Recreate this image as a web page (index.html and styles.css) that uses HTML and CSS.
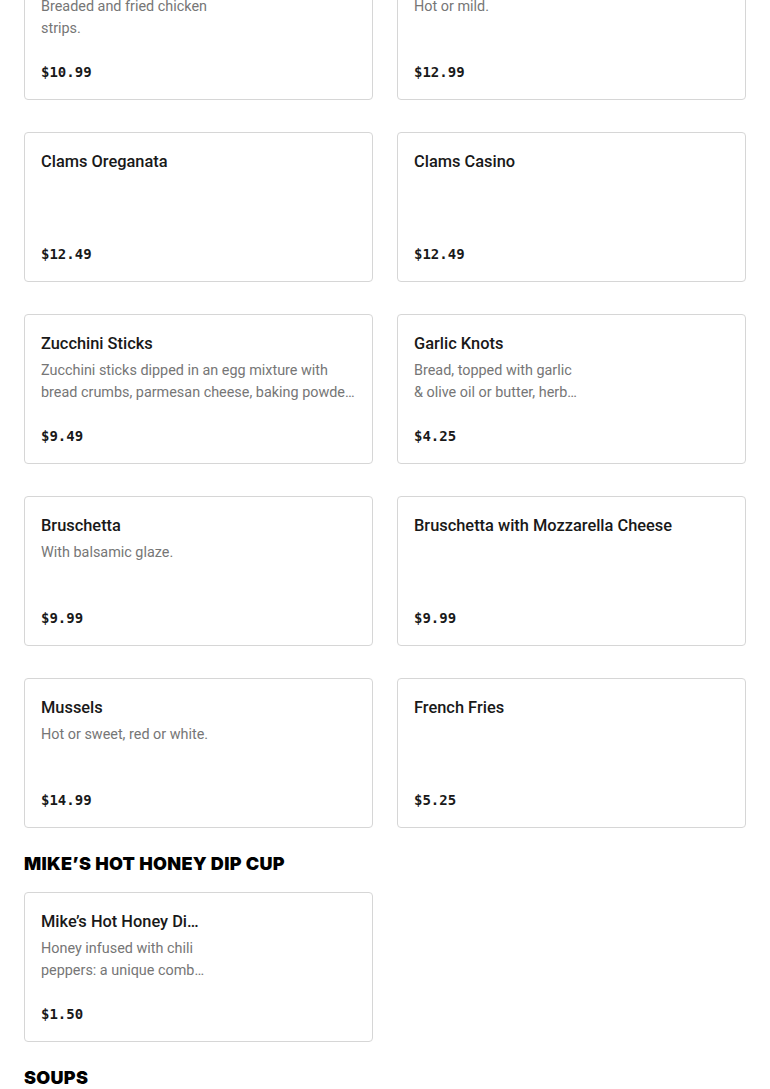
FILE: index.html
```html
<!DOCTYPE html>
<html lang="en">
<head>
<meta charset="utf-8">
<title>Menu</title>
<link rel="stylesheet" href="styles.css">
</head>
<body>
<main class="menu">
  <section class="section section-first">
    <div class="grid">
      <div class="card">
        <div class="card-title">Chicken Fingers</div>
        <div class="card-desc narrow"><span class="desc-line">Breaded and fried chicken</span><span class="desc-line">strips.</span></div>
        <div class="card-price">$10.99</div>
      </div>
      <div class="card">
        <div class="card-title">Buffalo Wings</div>
        <div class="card-desc narrow"><span class="desc-line">Hot or mild.</span></div>
        <div class="card-price">$12.99</div>
      </div>
      <div class="card">
        <div class="card-title">Clams Oreganata</div>
        <div class="card-price">$12.49</div>
      </div>
      <div class="card">
        <div class="card-title">Clams Casino</div>
        <div class="card-price">$12.49</div>
      </div>
      <div class="card">
        <div class="card-title">Zucchini Sticks</div>
        <div class="card-desc"><span class="desc-line">Zucchini sticks dipped in an egg mixture with</span><span class="desc-line">bread crumbs, parmesan cheese, baking powder and spices.</span></div>
        <div class="card-price">$9.49</div>
      </div>
      <div class="card">
        <div class="card-title">Garlic Knots</div>
        <div class="card-desc narrow"><span class="desc-line">Bread, topped with garlic</span><span class="desc-line">&amp; olive oil or butter, herbs and parmesan.</span></div>
        <div class="card-price">$4.25</div>
      </div>
      <div class="card">
        <div class="card-title">Bruschetta</div>
        <div class="card-desc"><span class="desc-line">With balsamic glaze.</span></div>
        <div class="card-price">$9.99</div>
      </div>
      <div class="card">
        <div class="card-title">Bruschetta with Mozzarella Cheese</div>
        <div class="card-price">$9.99</div>
      </div>
      <div class="card">
        <div class="card-title">Mussels</div>
        <div class="card-desc"><span class="desc-line">Hot or sweet, red or white.</span></div>
        <div class="card-price">$14.99</div>
      </div>
      <div class="card">
        <div class="card-title">French Fries</div>
        <div class="card-price">$5.25</div>
      </div>
    </div>
  </section>

  <section class="section">
    <h2 class="section-title">MIKE’S HOT HONEY DIP CUP</h2>
    <div class="grid">
      <div class="card">
        <div class="card-title narrow-title">Mike’s Hot Honey Dip Cup</div>
        <div class="card-desc narrow"><span class="desc-line">Honey infused with chili</span><span class="desc-line">peppers: a unique combination of sweet and heat.</span></div>
        <div class="card-price">$1.50</div>
      </div>
    </div>
  </section>

  <section class="section">
    <h2 class="section-title">SOUPS</h2>
  </section>
</main>
</body>
</html>
```

FILE: styles.css
```css
* { box-sizing: border-box; }

html, body {
  margin: 0;
  padding: 0;
  background: #ffffff;
}

body {
  font-family: Roboto, "Noto Sans", "Liberation Sans", sans-serif;
  color: #191919;
  overflow: hidden;
}

.menu {
  padding: 0 24px;
}

.section-first {
  margin-top: -50px;
}

.section-title {
  margin: 22px 0 14px;
  font-family: Inter, "Liberation Sans", sans-serif;
  font-weight: 900;
  font-size: 18px;
  line-height: 28px;
  letter-spacing: 0.3px;
  color: #000;
}

.grid {
  display: grid;
  grid-template-columns: 349px 349px;
  column-gap: 24px;
  row-gap: 32px;
}

.card {
  display: flex;
  flex-direction: column;
  height: 150px;
  padding: 16px 16px 17px;
  border: 1px solid #d6d6d6;
  border-radius: 4px;
  background: #fff;
}

.card-title {
  margin-top: 1px;
  font-size: 16.4px;
  font-weight: 500;
  line-height: 24px;
  color: #191919;
  white-space: nowrap;
  overflow: hidden;
  text-overflow: ellipsis;
}

.narrow-title {
  max-width: 164px;
}

.card-desc {
  display: flex;
  flex-direction: column;
  margin-top: 4px;
  font-size: 14.4px;
  line-height: 22px;
  color: #767676;
}

.desc-line {
  display: block;
  white-space: nowrap;
  overflow: hidden;
  text-overflow: ellipsis;
}

.desc-line:first-child {
  overflow: visible;
}

.card-desc.narrow {
  max-width: 165px;
}

.card-price {
  margin-top: auto;
  font-family: "DejaVu Sans Mono", "Liberation Mono", monospace;
  font-weight: 700;
  font-size: 14px;
  line-height: 20px;
  color: #191919;
}
```
